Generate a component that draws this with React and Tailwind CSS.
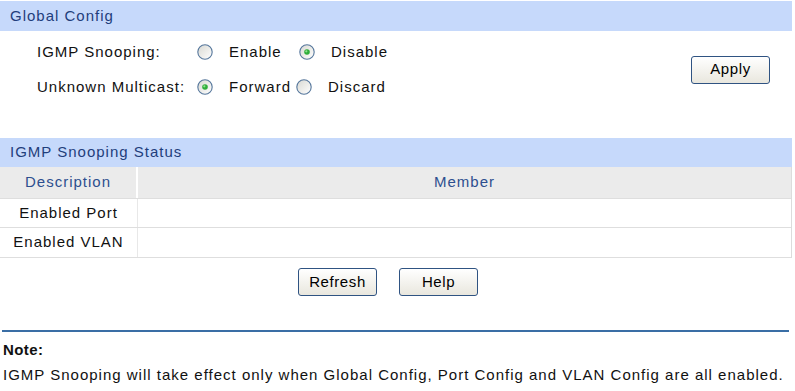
import React from "react";

function Radio({ checked }) {
  return (
    <svg width="16" height="16" viewBox="0 0 16 16" className="shrink-0">
      <defs>
        <linearGradient id="rg" x1="0" y1="0" x2="1" y2="1">
          <stop offset="0" stopColor="#d8d8d2" />
          <stop offset="1" stopColor="#ffffff" />
        </linearGradient>
      </defs>
      <circle cx="8" cy="8" r="7.2" fill="url(#rg)" stroke="#56779c" strokeWidth="1.1" />
      {checked && (
        <>
          <circle cx="8" cy="8" r="2.8" fill="#2fae3a" />
          <circle cx="7.3" cy="7.3" r="1.1" fill="#8fe08f" />
        </>
      )}
    </svg>
  );
}

function Option({ checked, label, width }) {
  return (
    <div className={`flex items-center ${width}`}>
      <Radio checked={checked} />
      <span className="ml-[16px]">{label}</span>
    </div>
  );
}

function Btn({ children }) {
  return (
    <button className="w-[79px] h-[28px] border border-[#2f5382] rounded-[3px] bg-gradient-to-b from-white to-[#e9e7de] text-[15px] text-black tracking-[0.6px]">
      {children}
    </button>
  );
}

export default function App() {
  return (
    <div className="w-[795px] h-[391px] bg-white text-[#111] font-['Liberation_Sans',Arial,sans-serif] text-[15px] tracking-[1px] overflow-hidden">
      <div className="w-[792px] pt-px">
        {/* Global Config */}
        <div className="h-[30px] bg-[#c6d9fb] text-[#1f3e7c] pl-[10px] flex items-center">
          Global Config
        </div>
        <div className="flex items-center h-[107px] pb-[30px]">
          <div className="pl-[37px] flex flex-col">
            <div className="flex items-center h-[35px]">
              <span className="w-[160px]">IGMP Snooping:</span>
              <Option checked={false} label="Enable" width="w-[102px]" />
              <Option checked={true} label="Disable" />
            </div>
            <div className="flex items-center h-[35px]">
              <span className="w-[160px]">Unknown Multicast:</span>
              <Option checked={true} label="Forward" width="w-[99px]" />
              <Option checked={false} label="Discard" />
            </div>
          </div>
          <div className="ml-auto mr-[22px]">
            <Btn>Apply</Btn>
          </div>
        </div>

        {/* IGMP Snooping Status */}
        <div className="h-[29px] bg-[#c6d9fb] text-[#1f3e7c] pl-[10px] flex items-center">
          IGMP Snooping Status
        </div>
        <div className="border-r border-[#dcdcdc]">
          <div className="grid grid-cols-[138px_1fr] h-[31px] bg-[#ebebeb] text-[#2d4f8f]">
            <div className="flex items-center justify-center border-r-2 border-white">Description</div>
            <div className="flex items-center justify-center">Member</div>
          </div>
          <div className="grid grid-cols-[138px_1fr] h-[30px] border-y border-[#dedede]">
            <div className="flex items-center justify-center border-r border-[#e8e8e8]">Enabled Port</div>
            <div></div>
          </div>
          <div className="grid grid-cols-[138px_1fr] h-[30px] border-b border-[#dedede]">
            <div className="flex items-center justify-center border-r border-[#e8e8e8]">Enabled VLAN</div>
            <div></div>
          </div>
        </div>

        <div className="flex gap-[22px] pl-[298px] mt-[10px]">
          <Btn>Refresh</Btn>
          <Btn>Help</Btn>
        </div>

        <div className="mt-[34px] ml-[2px] w-[787px] h-[2px] bg-[#3a6ea5]"></div>
        <div className="pl-[3px] pt-[9px] font-bold tracking-[0.4px] leading-[18px]">Note:</div>
        <div className="pl-[3px] pt-[7px] leading-[18px]">
          IGMP Snooping will take effect only when Global Config, Port Config and VLAN Config are all enabled.
        </div>
      </div>
    </div>
  );
}
